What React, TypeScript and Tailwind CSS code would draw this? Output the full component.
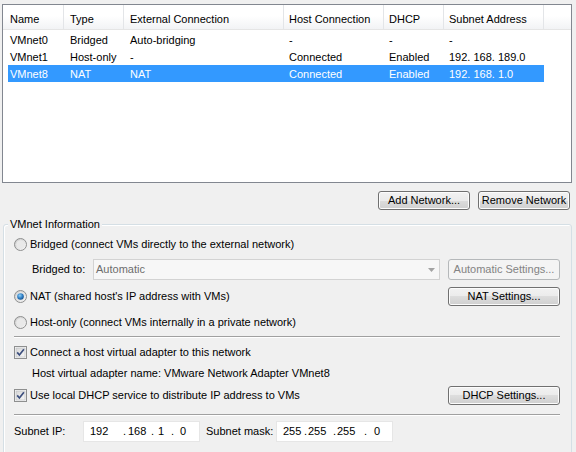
import React from 'react';

type Col = { label: string; w: string; pl: string };

const cols: Col[] = [
  { label: 'Name', w: 'w-[61px]', pl: 'pl-[7px]' },
  { label: 'Type', w: 'w-[60px]', pl: 'pl-[6px]' },
  { label: 'External Connection', w: 'w-[160px]', pl: 'pl-[6px]' },
  { label: 'Host Connection', w: 'w-[100px]', pl: 'pl-[5px]' },
  { label: 'DHCP', w: 'w-[60px]', pl: 'pl-[5px]' },
  { label: 'Subnet Address', w: 'w-[100px]', pl: 'pl-[5px]' },
];

// row cells: first one is narrower because the row starts a bit to the right
const rowCols = [
  'w-[56px] pl-[2px]',
  'w-[60px] pl-[6px]',
  'w-[160px] pl-[6px]',
  'w-[100px] pl-[5px]',
  'w-[60px] pl-[5px]',
  'w-[100px] pl-[5px]',
];

const networks = [
  ['VMnet0', 'Bridged', 'Auto-bridging', '-', '-', '-'],
  ['VMnet1', 'Host-only', '-', 'Connected', 'Enabled', '192. 168. 189.0'],
  ['VMnet8', 'NAT', 'NAT', 'Connected', 'Enabled', '192. 168. 1.0'],
];

function Btn({
  children,
  className = '',
  disabled = false,
}: {
  children: React.ReactNode;
  className?: string;
  disabled?: boolean;
}) {
  return (
    <div
      className={`flex shrink-0 items-center justify-center rounded-[3px] border ${
        disabled
          ? 'border-[#b5b8ba] bg-[#f4f4f4] text-[#838383]'
          : 'border-[#707070] bg-[linear-gradient(to_bottom,#f2f2f2_0%,#ebebeb_50%,#dddddd_50%,#cfcfcf_100%)] text-black shadow-[inset_0_0_0_1px_#fcfcfc]'
      } ${className}`}
    >
      {children}
    </div>
  );
}

function Radio({ checked = false }: { checked?: boolean }) {
  return (
    <svg width="13" height="13" viewBox="0 0 13 13" className="shrink-0">
      <defs>
        <linearGradient id="rg" x1="0" y1="0" x2="1" y2="1">
          <stop offset="0" stopColor="#c8c8c8" />
          <stop offset="1" stopColor="#fbfbfb" />
        </linearGradient>
        <radialGradient id="rdot" cx="0.4" cy="0.35" r="0.7">
          <stop offset="0" stopColor="#8fd0f8" />
          <stop offset="0.6" stopColor="#2c7bc2" />
          <stop offset="1" stopColor="#164e86" />
        </radialGradient>
      </defs>
      <circle cx="6.5" cy="6.5" r="6" fill="url(#rg)" stroke="#8e8f8f" />
      <circle cx="6.5" cy="6.5" r="4.2" fill="#e9e9e9" />
      {checked && <circle cx="6.5" cy="6.5" r="3.3" fill="url(#rdot)" />}
    </svg>
  );
}

function Check() {
  return (
    <svg width="13" height="13" viewBox="0 0 13 13" className="shrink-0">
      <defs>
        <linearGradient id="cg" x1="0" y1="0" x2="1" y2="1">
          <stop offset="0" stopColor="#d6d6d6" />
          <stop offset="1" stopColor="#f8f8f8" />
        </linearGradient>
      </defs>
      <rect x="0.5" y="0.5" width="12" height="12" fill="#f6f6f6" stroke="#8e8f8f" />
      <rect x="2" y="2" width="9" height="9" fill="url(#cg)" stroke="#b9bcc0" strokeWidth="0.6" />
      <path d="M3.2 6.4 L5.4 9 L9.9 3.2" fill="none" stroke="#3c4f7e" strokeWidth="1.7" />
    </svg>
  );
}

function Separator({ className = '' }: { className?: string }) {
  return <div className={`border-t border-b border-t-[#a0a0a0] border-b-white ${className}`} />;
}

export default function App() {
  return (
    <div className="h-[452px] w-[576px] overflow-hidden bg-[#f0f0f0] px-[2px] pt-[4px] font-['Liberation_Sans',Arial,sans-serif] text-[11px] text-black">
      {/* Network list */}
      <div className="h-[179px] w-[570px] border border-[#828790] bg-white">
        <div className="flex h-[25px] border-b border-[#e5e5e5] bg-[linear-gradient(to_bottom,#ffffff_0%,#ffffff_45%,#f2f3f5_100%)]">
          {cols.map((c) => (
            <div
              key={c.label}
              className={`flex shrink-0 items-center border-r border-[#e3e5e8] pt-[4px] ${c.w} ${c.pl}`}
            >
              {c.label}
            </div>
          ))}
          <div className="flex-1" />
        </div>
        <div className="mt-px">
          {networks.map((row, i) => (
            <div
              key={row[0]}
              className={`ml-[5px] flex h-[17px] w-[536px] items-center pt-[2px] ${
                i === 2 ? 'bg-[#3399ff] text-white' : ''
              }`}
            >
              {row.map((cell, j) => (
                <div key={j} className={`shrink-0 whitespace-pre ${rowCols[j]}`}>
                  {cell}
                </div>
              ))}
            </div>
          ))}
        </div>
      </div>

      {/* List buttons */}
      <div className="mt-[8px] flex justify-end gap-[8px] pr-[4px]">
        <Btn className="h-[19px] w-[92px]">Add Network...</Btn>
        <Btn className="h-[19px] w-[92px]">Remove Network</Btn>
      </div>

      {/* VMnet Information group */}
      <div className="relative ml-px mr-[2px] mt-[14px] h-[260px] rounded-[3px] border border-[#d5dfe5] pl-[10px] pr-[11px] pt-[10px] shadow-[inset_1px_1px_0_#ffffff]">
        <span className="absolute left-[4px] top-[-8px] bg-[#f0f0f0] px-[2px] leading-[14px]">
          VMnet Information
        </span>

        <div className="flex h-[18px] items-center gap-[3px]">
          <Radio />
          <span>Bridged (connect VMs directly to the external network)</span>
        </div>

        <div className="mt-[6px] flex h-[21px] items-center pl-[18px]">
          <span className="w-[61px] shrink-0">Bridged to:</span>
          <div className="flex h-[21px] w-[347px] shrink-0 items-center justify-between border border-[#d3d3d3] bg-[#f7f7f7] pl-[2px] pr-[4px] text-[#6d6d6d]">
            <span>Automatic</span>
            <svg width="7" height="4" viewBox="0 0 7 4">
              <path d="M0 0 H7 L3.5 4 Z" fill="#a3a3a3" />
            </svg>
          </div>
          <Btn disabled className="ml-auto h-[21px] w-[112px]">
            Automatic Settings...
          </Btn>
        </div>

        <div className="mt-[7px] flex h-[19px] items-center gap-[3px]">
          <Radio checked />
          <span>NAT (shared host's IP address with VMs)</span>
          <Btn className="ml-auto h-[19px] w-[112px]">NAT Settings...</Btn>
        </div>

        <div className="mt-[7px] flex h-[18px] items-center gap-[3px]">
          <Radio />
          <span>Host-only (connect VMs internally in a private network)</span>
        </div>

        <Separator className="mt-[5px]" />

        <div className="mt-[5px] flex h-[18px] items-center gap-[3px]">
          <Check />
          <span>Connect a host virtual adapter to this network</span>
        </div>

        <div className="mt-[3px] flex h-[18px] items-center pl-[18px]">
          Host virtual adapter name: VMware Network Adapter VMnet8
        </div>

        <div className="mt-[4px] flex h-[19px] items-center gap-[3px]">
          <Check />
          <span>Use local DHCP service to distribute IP address to VMs</span>
          <Btn className="ml-auto h-[19px] w-[112px]">DHCP Settings...</Btn>
        </div>

        <Separator className="mt-[9px]" />

        <div className="mt-[5px] flex h-[21px] items-center">
          <span className="w-[69px] shrink-0">Subnet IP:</span>
          <div className="flex h-[21px] w-[117px] shrink-0 items-center border border-[#e6e6e6] bg-white pl-[6px]">
            <span className="w-[33px] shrink-0">192</span>
            <span className="w-[5px] shrink-0">.</span>
            <span className="w-[23px] shrink-0">168</span>
            <span className="w-[7px] shrink-0">.</span>
            <span className="w-[13px] shrink-0">1</span>
            <span className="w-[9px] shrink-0">.</span>
            <span>0</span>
          </div>
          <span className="ml-[6px] w-[70px] shrink-0">Subnet mask:</span>
          <div className="flex h-[21px] w-[117px] shrink-0 items-center border border-[#e6e6e6] bg-white pl-[6px]">
            <span className="w-[21px] shrink-0">255</span>
            <span className="w-[4px] shrink-0">.</span>
            <span className="w-[25px] shrink-0">255</span>
            <span className="w-[4px] shrink-0">.</span>
            <span className="w-[27px] shrink-0">255</span>
            <span className="w-[10px] shrink-0">.</span>
            <span>0</span>
          </div>
        </div>
      </div>
    </div>
  );
}
